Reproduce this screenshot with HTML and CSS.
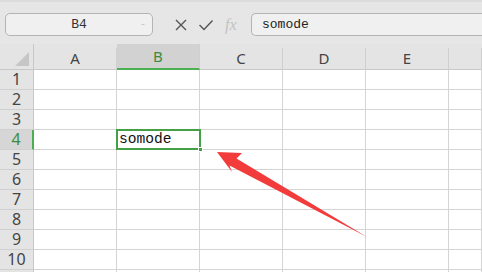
FILE: index.html
```html
<!DOCTYPE html>
<html lang="en">
  <head>
    <meta charset="UTF-8" />
    <title>Sheet</title>
    <link rel="stylesheet" href="styles.css">
  </head>
  <body>
    <!-- name box + formula bar -->
    <div class="toolbar">
      <div class="namebox">B4<span class="drop">-</span></div>
      <div class="fbtns">
        <svg class="ico" width="14" height="14" viewBox="0 0 14 14"><path d="M2 2 L12 12 M12 2 L2 12" stroke="#555" stroke-width="1.4" fill="none"/></svg>
        <svg class="ico" width="16" height="14" viewBox="0 0 16 14"><path d="M1.5 7 L6 11.5 L14.5 2.5" stroke="#555" stroke-width="1.4" fill="none"/></svg>
        <span class="fx">fx</span>
      </div>
      <div class="formula">somode</div>
    </div>

    <!-- sheet grid -->
    <div class="sheet">
      <div class="corner"><span class="tri"></span></div>
      <div class="colhead">A</div>
      <div class="colhead active">B</div>
      <div class="colhead">C</div>
      <div class="colhead">D</div>
      <div class="colhead">E</div>
      <div class="colhead"></div>
    </div>
    <div class="rows" id="rows"></div>

    <svg class="arrow" width="482" height="272" viewBox="0 0 482 272">
      <polygon points="217,152 242,153 236.5,158.5 367,237 229.5,165.5 232,172" fill="#f23b3b"/>
    </svg>

    <script>
      // build rows 1..10, plus the top sliver of the next row
      const rows = document.getElementById("rows");
      for (let i = 1; i <= 11; i++) {
        const row = document.createElement("div");
        row.className = "row" + (i === 4 ? " active" : "");
        let html = `<div class="rowhead">${i <= 10 ? i : ""}</div>`;
        for (let c = 0; c < 6; c++) {
          if (i === 4 && c === 1) {
            html += `<div class="cell selected">somode<span class="handle"></span></div>`;
          } else {
            html += `<div class="cell"></div>`;
          }
        }
        row.innerHTML = html;
        rows.appendChild(row);
      }
    </script>
  </body>
</html>
```

FILE: styles.css
```css
* {
  margin: 0;
  padding: 0;
  box-sizing: border-box;
}
body {
  width: 482px;
  height: 272px;
  overflow: hidden;
  background: #ffffff;
  font-family: "Noto Sans", "Open Sans", sans-serif;
  position: relative;
}

/* toolbar */
.toolbar {
  height: 44px;
  background: #e6e6e6;
  border-top: 2px solid #dcdcdc;
  padding-top: 11px;
  display: flex;
  align-items: flex-start;
}
.namebox {
  margin-left: 5px;
  width: 148px;
  height: 23px;
  background: #f0f0f0;
  border: 1px solid #b4b4b4;
  border-radius: 5px;
  font-family: "Liberation Mono", monospace;
  font-size: 13px;
  color: #333;
  line-height: 21px;
  text-align: center;
  position: relative;
}
.drop {
  position: absolute;
  right: 6px;
  top: 0;
  font-size: 10px;
  color: #c4c4c4;
}
.fbtns {
  width: 98px;
  height: 23px;
  display: flex;
  align-items: center;
  padding-left: 21px;
  gap: 10px;
}
.fx {
  font-family: "Liberation Serif", serif;
  font-style: italic;
  font-size: 16px;
  color: #c2c2c2;
  margin-left: 1px;
  line-height: 16px;
}
.formula {
  flex: 1;
  height: 23px;
  background: #f0f0f0;
  border: 1px solid #b4b4b4;
  border-right: none;
  border-radius: 5px 0 0 5px;
  font-family: "Liberation Mono", monospace;
  font-size: 13px;
  color: #222;
  line-height: 21px;
  padding-left: 10px;
}

/* column headers */
.sheet {
  display: grid;
  grid-template-columns: 34px 83px 83px 83px 83px 83px 1fr;
  height: 26px;
  background: #e4e4e4;
  border-bottom: 1px solid #c8c8c8;
}
.corner {
  position: relative;
  border-right: 1px solid #c8c8c8;
}
.tri {
  position: absolute;
  right: 4px;
  bottom: 4px;
  width: 0;
  height: 0;
  border-left: 14px solid transparent;
  border-bottom: 14px solid #c6c6c6;
}
.colhead {
  font-size: 15px;
  color: #444;
  text-align: center;
  border-right: 1px solid #cfcfcf;
  margin-top: 4px;
  line-height: 21px;
}
.colhead.active {
  margin-top: 0;
  line-height: 25px;
  background: #d2d2d2;
  color: #3d8b3d;
  border-bottom: 2px solid #4caf50;
  height: 26px;
}

/* rows */
.row {
  display: grid;
  grid-template-columns: 34px 83px 83px 83px 83px 83px 1fr;
  height: 20px;
}
.rowhead {
  background: #e4e4e4;
  border-right: 1px solid #c8c8c8;
  border-bottom: 1px solid #d0d0d0;
  font-size: 16px;
  color: #444;
  text-align: center;
  line-height: 19px;
}
.row.active .rowhead {
  background: #d6d6d6;
  color: #3d8b3d;
  border-right: 2px solid #4caf50;
}
.cell {
  border-right: 1px solid #d4d4d4;
  border-bottom: 1px solid #d4d4d4;
}
.cell.selected {
  position: relative;
  border: 2px solid #43a047;
  margin: -1px 0 0 -1px;
  width: 85px;
  height: 21px;
  font-family: "Liberation Mono", monospace;
  font-size: 14.6px;
  color: #111;
  line-height: 17px;
  padding-left: 1px;
}
.handle {
  position: absolute;
  right: -4px;
  bottom: -4px;
  width: 5px;
  height: 5px;
  background: #43a047;
  border: 1px solid #fff;
}

/* arrow overlay */
.arrow {
  position: absolute;
  left: 0;
  top: 0;
}
```
